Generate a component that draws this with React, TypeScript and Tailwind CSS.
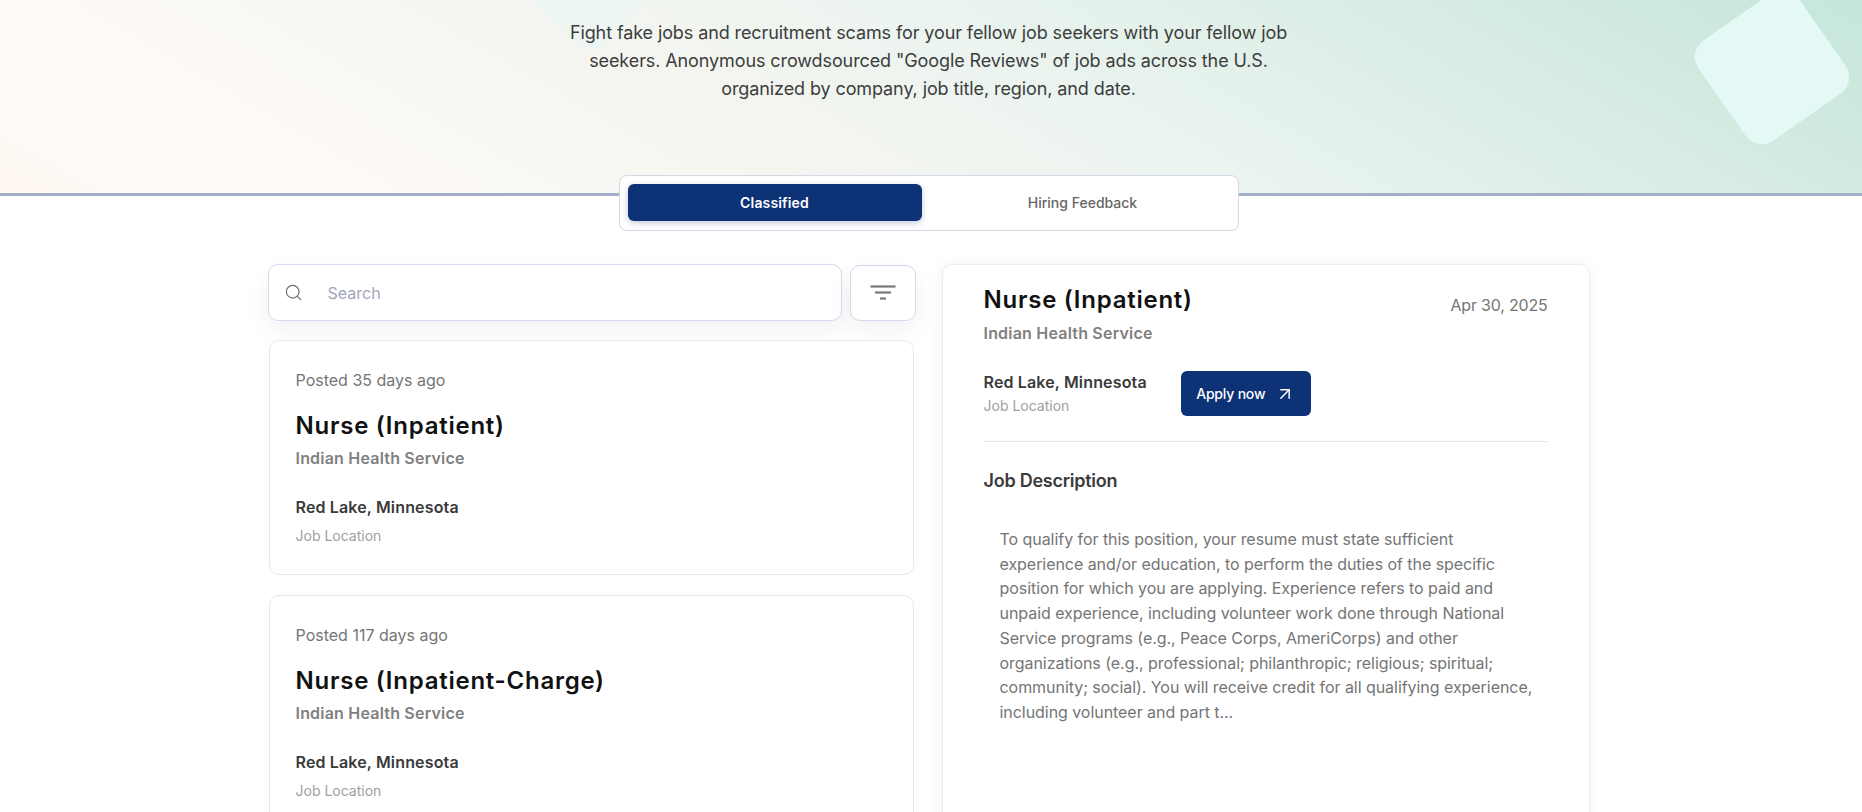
import React from "react";
import { Search, ArrowUpRight } from "lucide-react";

const font = { fontFamily: '"Inter", "Noto Sans", sans-serif' };
const company = "Indian Health Service";

function JobCard({ posted, title }: { posted: string; title: string }) {
  return (
    <div className="h-[235px] shrink-0 rounded-[10px] border border-[#e6e8f2] bg-white pl-[26px] pt-[27px]">
      <div className="text-[16px] leading-[24px] text-[#757575]">{posted}</div>
      <div className="mt-[16px] text-[24px] font-semibold leading-[36px] tracking-[0.75px] text-[#111111]">{title}</div>
      <div className="mt-[4px] text-[16px] font-semibold leading-[20px] tracking-[0.2px] text-[#808080]">{company}</div>
      <div className="mt-[27px] text-[16px] font-semibold leading-[24px] tracking-[0.15px] text-[#3a3a3a]">Red Lake, Minnesota</div>
      <div className="mt-[5px] text-[14px] leading-[24px] text-[#a0a0a0]">Job Location</div>
    </div>
  );
}

export default function App() {
  return (
    <div style={font} className="h-[812px] overflow-hidden bg-white">
      <header className="relative h-[196px] overflow-hidden border-b-[3px] border-[#a3aec9] bg-[linear-gradient(30deg,#fff8f3_0%,#fffbf8_12%,#f4f5f0_40%,#ebf4ef_57%,#dceee6_75%,#cfe9de_88%,#c6e7dc_100%)] pt-[19px]">
        <div className="absolute left-[529px] top-[-89px] h-[122px] w-[122px] rotate-[45deg] rounded-[18px] bg-[#edf6f2]" />
        <div className="absolute left-[1711px] top-[6px] h-[122px] w-[122px] rotate-[-35deg] rounded-[20px] bg-[#e4f9f6]" />
        <div className="relative w-[1857px]">
          <p className="mx-auto w-[740px] text-center text-[18px] leading-[28px] tracking-[-0.1px] text-[#3d3d3d]">
            Fight fake jobs and recruitment scams for your fellow job seekers with your fellow job seekers. Anonymous crowdsourced "Google Reviews" of job ads across the U.S. organized by company, job title, region, and date.
          </p>
        </div>
      </header>

      <div className="w-[1857px]">
        <div className="relative z-10 mx-auto -mt-[21px] flex h-[56px] w-[620px] items-start rounded-[8px] border border-[#d5d7e3] bg-white px-[8px] pt-[8px]">
          <button className="h-[37px] w-[294px] rounded-[6px] bg-[#0d3276] text-[14px] font-semibold tracking-[0.15px] text-white shadow-[0_2px_6px_rgba(13,50,118,0.25)]">Classified</button>
          <button className="h-[37px] flex-1 pl-[14px] text-[14px] font-[550] text-[#666666]">Hiring Feedback</button>
        </div>

        <main className="mx-auto mt-[33px] flex w-[1322px] items-start gap-[26px]">
          <div className="flex w-[648px] shrink-0 flex-col">
            <div className="flex items-center gap-[8px]">
              <div className="flex h-[57px] w-[575px] items-center rounded-[10px] border border-[#d3d9ee] bg-white pl-[15px] shadow-[0_10px_24px_rgba(30,40,80,0.06)]">
                <Search size={19} strokeWidth={1.5} className="text-[#6f6f6f]" />
                <span className="ml-[25px] text-[16px] text-[#a3a6ba]">Search</span>
              </div>
              <button className="flex h-[56px] w-[66px] items-center justify-center rounded-[10px] border border-[#d3d9ee] bg-white shadow-[0_10px_24px_rgba(30,40,80,0.06)]">
                <svg width="26" height="15" viewBox="0 0 26 15" fill="none" stroke="#777777" strokeWidth="2.2">
                  <path d="M0.5 1.5h25" />
                  <path d="M5 7.5h16" />
                  <path d="M10 13.5h6" />
                </svg>
              </button>
            </div>
            <div className="ml-[1px] mt-[19px] flex w-[645px] flex-col gap-[20px]">
              <JobCard posted="Posted 35 days ago" title="Nurse (Inpatient)" />
              <JobCard posted="Posted 117 days ago" title="Nurse (Inpatient-Charge)" />
            </div>
          </div>

          <section className="h-[700px] w-[648px] shrink-0 rounded-[10px] border border-[#ecedf2] bg-white px-[41px] pt-[17px] shadow-[0_0_16px_rgba(30,40,80,0.05)]">
            <div className="flex items-start justify-between">
              <div>
                <div className="text-[24px] font-semibold leading-[36px] tracking-[0.75px] text-[#111111]">Nurse (Inpatient)</div>
                <div className="mt-[5px] text-[16px] font-semibold leading-[20px] tracking-[0.2px] text-[#808080]">{company}</div>
              </div>
              <div className="mt-[11px] text-[16px] leading-[24px] tracking-[-0.2px] text-[#757575]">Apr 30, 2025</div>
            </div>
            <div className="mt-[28px] flex items-start gap-[34px]">
              <div>
                <div className="text-[16px] font-semibold leading-[22px] tracking-[0.15px] text-[#3a3a3a]">Red Lake, Minnesota</div>
                <div className="mt-[3px] text-[14px] leading-[20px] text-[#a0a0a0]">Job Location</div>
              </div>
              <button className="flex h-[45px] w-[130px] items-center justify-center gap-[10px] rounded-[6px] bg-[#0d3276] text-[14px] font-medium tracking-[-0.2px] text-white">
                Apply now
                <ArrowUpRight size={20} strokeWidth={1.75} />
              </button>
            </div>
            <div className="mt-[25px] h-px bg-[#e5e5e5]" />
            <div className="mt-[27px] text-[18px] font-semibold leading-[24px] tracking-[-0.25px] text-[#3a3a3a]">Job Description</div>
            <p className="mt-[34px] w-[537px] pl-[16px] box-content text-[16px] leading-[24.7px] tracking-[-0.05px] text-[#757575]">
              To qualify for this position, your resume must state sufficient experience and/or education, to perform the duties of the specific position for which you are applying. Experience refers to paid and unpaid experience, including volunteer work done through National Service programs (e.g., Peace Corps, AmeriCorps) and other organizations (e.g., professional; philanthropic; religious; spiritual; community; social). You will receive credit for all qualifying experience, including volunteer and part t...
            </p>
          </section>
        </main>
      </div>
    </div>
  );
}
